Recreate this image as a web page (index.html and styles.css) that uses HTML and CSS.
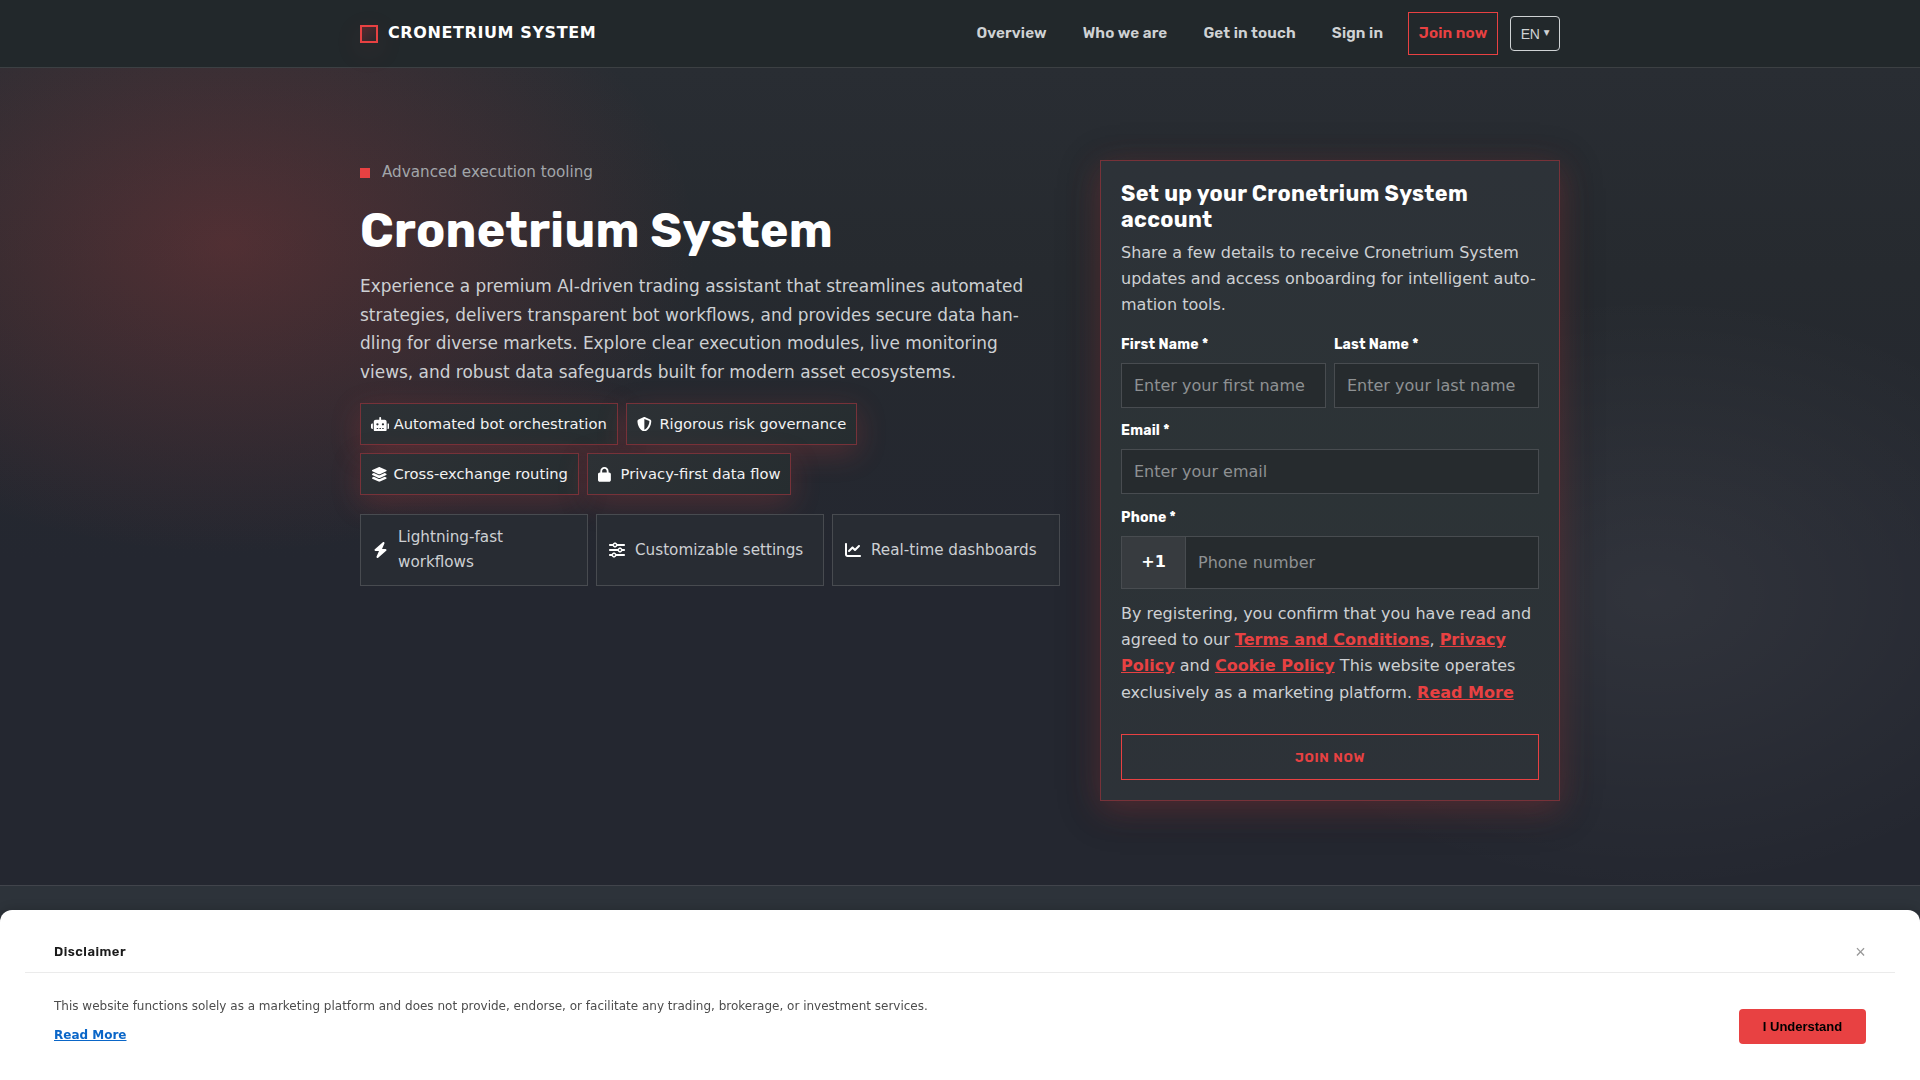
FILE: index.html
```html
<!DOCTYPE html>
<html lang="en">
<head>
<meta charset="utf-8">
<title>Cronetrium System</title>
<link rel="stylesheet" href="styles.css">
</head>
<body>
<header class="header">
  <div class="container header-row">
    <a class="brand"><span class="brand-mark"></span><span class="brand-name">CRONETRIUM SYSTEM</span></a>
    <nav class="nav">
      <a class="nav-link">Overview</a>
      <a class="nav-link">Who we are</a>
      <a class="nav-link">Get in touch</a>
      <a class="nav-link">Sign in</a>
      <a class="nav-link nav-cta">Join now</a>
      <button class="lang">EN <span class="caret">▼</span></button>
    </nav>
  </div>
</header>
<main class="hero">
  <div class="container hero-grid">
    <section class="intro">
      <div class="eyebrow"><span class="dot"></span>Advanced execution tooling</div>
      <h1 class="title">Cronetrium System</h1>
      <p class="lead">Experience a premium AI-driven trading assistant that streamlines automated<br>strategies, delivers transparent bot workflows, and provides secure data han-<br>dling for diverse markets. Explore clear execution modules, live monitoring<br>views, and robust data safeguards built for modern asset ecosystems.</p>
      <div class="chips">
        <span class="chip"><svg class="icon robot" viewBox="0 0 640 512"><path fill-rule="evenodd" d="M320 0c17.700 0 32 14.300 32 32V96H472c39.800 0 72 32.200 72 72V440c0 39.800-32.200 72-72 72H168c-39.800 0-72-32.200-72-72V168c0-39.800 32.200-72 72-72H288V32c0-17.700 14.300-32 32-32zM208 384c-8.800 0-16 7.200-16 16s7.200 16 16 16h32c8.800 0 16-7.200 16-16s-7.200-16-16-16H208zm96 0c-8.800 0-16 7.200-16 16s7.200 16 16 16h32c8.800 0 16-7.200 16-16s-7.200-16-16-16H304zm96 0c-8.800 0-16 7.200-16 16s7.200 16 16 16h32c8.800 0 16-7.200 16-16s-7.200-16-16-16H400zM264 256a40 40 0 1 0-80 0 40 40 0 1 0 80 0zm152 40a40 40 0 1 0 0-80 40 40 0 1 0 0 80zM48 224H64V416H48c-26.500 0-48-21.500-48-48V272c0-26.500 21.500-48 48-48zm544 0c26.500 0 48 21.500 48 48v96c0 26.500-21.500 48-48 48H576V224h16z"/></svg>Automated bot orchestration</span>
        <span class="chip"><svg class="icon small" viewBox="0 0 512 512" preserveAspectRatio="xMinYMid meet"><path fill-rule="evenodd" d="M256 0c4.600 0 9.200 1 13.400 2.900L457.700 82.800c22 9.300 38.400 31 38.300 57.200c-.5 99.200-41.300 280.700-213.600 363.200c-16.700 8-36.100 8-52.800 0C57.300 420.700 16.500 239.200 16 140c-.1-26.200 16.300-47.900 38.300-57.200L242.700 2.900C246.800 1 251.400 0 256 0zm0 66.800V444.800C394 378 431.100 230.100 432 141.400L256 66.800z"/></svg>Rigorous risk governance</span>
        <span class="chip"><svg class="icon small" viewBox="0 0 576 512" preserveAspectRatio="xMinYMid meet"><path d="M264.500 5.200c14.900-6.900 32.100-6.900 47 0l218.600 101c8.500 3.900 13.900 12.400 13.900 21.800s-5.400 17.900-13.900 21.800l-218.600 101c-14.900 6.900-32.100 6.900-47 0L45.900 149.800C37.400 145.800 32 137.300 32 128s5.400-17.900 13.900-21.800L264.500 5.200zM476.900 209.600l53.200 24.600c8.500 3.900 13.900 12.400 13.900 21.800s-5.400 17.900-13.900 21.800l-218.600 101c-14.900 6.900-32.100 6.900-47 0L45.900 277.800C37.400 273.800 32 265.300 32 256s5.400-17.900 13.900-21.800l53.200-24.600 152 70.200c23.400 10.800 50.400 10.800 73.800 0l152-70.200zm0 128l53.200 24.600c8.500 3.900 13.900 12.400 13.900 21.800s-5.400 17.900-13.900 21.800l-218.600 101c-14.900 6.900-32.100 6.900-47 0L45.900 405.800C37.400 401.800 32 393.300 32 384s5.400-17.900 13.900-21.800l53.200-24.600 152 70.200c23.400 10.800 50.400 10.800 73.800 0l152-70.200z"/></svg>Cross-exchange routing</span>
        <span class="chip"><svg class="icon small" viewBox="0 0 448 512" preserveAspectRatio="xMinYMid meet"><path fill-rule="evenodd" d="M144 144v48H304V144c0-44.200-35.800-80-80-80s-80 35.800-80 80zM80 192V144C80 64.500 144.500 0 224 0s144 64.500 144 144v48h16c35.300 0 64 28.700 64 64V448c0 35.300-28.700 64-64 64H64c-35.300 0-64-28.700-64-64V256c0-35.300 28.700-64 64-64H80z"/></svg>Privacy-first data flow</span>
      </div>
      <div class="features">
        <div class="feature"><svg class="icon bolt" viewBox="0 0 448 512"><path d="M349.400 44.600c5.900-13.700 1.500-29.700-10.600-38.500s-28.600-8-39.900 1.800l-256 224c-10 8.800-13.600 22.900-8.900 35.300S50.700 288 64 288H175.500L98.600 467.400c-5.900 13.700-1.500 29.700 10.600 38.500s28.600 8 39.900-1.800l256-224c10-8.800 13.600-22.900 8.900-35.300s-16.600-20.700-30-20.700H272.500L349.400 44.600z"/></svg><span>Lightning-fast workflows</span></div>
        <div class="feature"><svg class="icon square" viewBox="0 0 512 512"><path fill-rule="evenodd" d="M0 416c0 17.700 14.300 32 32 32l54.700 0c12.300 28.300 40.500 48 73.300 48s61-19.700 73.300-48L480 448c17.700 0 32-14.300 32-32s-14.300-32-32-32l-246.700 0c-12.300-28.300-40.500-48-73.300-48s-61 19.700-73.300 48L32 384c-17.700 0-32 14.300-32 32zm128 0a32 32 0 1 1 64 0 32 32 0 1 1-64 0zM320 256a32 32 0 1 1 64 0 32 32 0 1 1-64 0zm32-80c-32.800 0-61 19.700-73.300 48L32 224c-17.700 0-32 14.300-32 32s14.300 32 32 32l246.700 0c12.300 28.300 40.500 48 73.300 48s61-19.700 73.300-48l54.700 0c17.700 0 32-14.300 32-32s-14.300-32-32-32l-54.700 0c-12.300-28.300-40.500-48-73.300-48zM192 128a32 32 0 1 1 0-64 32 32 0 1 1 0 64zm73.300-64C253 35.700 224.800 16 192 16s-61 19.700-73.300 48L32 64C14.300 64 0 78.300 0 96s14.300 32 32 32l86.700 0c12.300 28.300 40.500 48 73.300 48s61-19.700 73.300-48L480 128c17.700 0 32-14.300 32-32s-14.300-32-32-32L265.300 64z"/></svg><span>Customizable settings</span></div>
        <div class="feature"><svg class="icon square" viewBox="0 0 512 512"><path d="M64 64c0-17.700-14.300-32-32-32S0 46.300 0 64V400c0 44.200 35.800 80 80 80H480c17.700 0 32-14.300 32-32s-14.300-32-32-32H80c-8.800 0-16-7.200-16-16V64zm406.600 86.600c12.500-12.500 12.500-32.800 0-45.300s-32.800-12.500-45.300 0L320 210.700l-57.400-57.400c-12.500-12.500-32.800-12.500-45.300 0l-112 112c-12.500 12.500-12.500 32.800 0 45.300s32.800 12.500 45.300 0L240 221.300l57.400 57.400c12.500 12.500 32.800 12.500 45.300 0l128-128z"/></svg><span>Real-time dashboards</span></div>
      </div>
    </section>
    <form class="card">
      <h2 class="card-title">Set up your Cronetrium System<br>account</h2>
      <p class="card-text">Share a few details to receive Cronetrium System<br>updates and access onboarding for intelligent auto-<br>mation tools.</p>
      <div class="pair">
        <div class="field"><label class="label">First Name *</label><input class="input" placeholder="Enter your first name"></div>
        <div class="field"><label class="label">Last Name *</label><input class="input" placeholder="Enter your last name"></div>
      </div>
      <div class="field email"><label class="label">Email *</label><input class="input" placeholder="Enter your email"></div>
      <div class="field tel"><label class="label">Phone *</label>
        <div class="phone"><span class="prefix">+1</span><input class="phone-input" placeholder="Phone number"></div>
      </div>
      <p class="legal">By registering, you confirm that you have read and agreed to our <a>Terms and Conditions</a>, <a>Privacy Policy</a> and <a>Cookie Policy</a> This website operates exclusively as a marketing platform. <a>Read More</a></p>
      <button type="button" class="submit">JOIN NOW</button>
    </form>
  </div>
</main>
<div class="next-section"></div>
<aside class="disclaimer">
  <div class="disclaimer-head"><span class="disclaimer-title">Disclaimer</span><span class="close">×</span></div>
  <div class="disclaimer-body">
    <div class="disclaimer-copy"><p>This website functions solely as a marketing platform and does not provide, endorse, or facilitate any trading, brokerage, or investment services.</p><a>Read More</a></div>
    <button class="accept">I Understand</button>
  </div>
</aside>
</body>
</html>
```
FILE: styles.css
```css
* { box-sizing: border-box; }
html { overflow: hidden; }
body {
  margin: 0;
  height: 1080px;
  overflow: hidden;
  display: flex;
  flex-direction: column;
  background: #242730;
  color: #cdd0d3;
  font: 16px/1.65 "DejaVu Sans", sans-serif;
}
h1, h2, p { margin: 0; }
svg { display: block; fill: #fff; flex: none; }
.container { width: 1200px; margin: 0 auto; }

.header { position: relative; height: 68px; flex: none; background: #22282b; border-bottom: 1px solid #3c4043; }
.header-row { height: 67px; display: flex; justify-content: space-between; align-items: center; }
.brand { display: flex; align-items: center; gap: 10px; }
.brand-mark { width: 18px; height: 18px; margin-top: 2px; border: 2px solid #e84142; background: linear-gradient(135deg, #57292e, #2a292c); box-shadow: 0 8px 30px rgba(232,65,66,.12); }
.brand-name { font-size: 16px; font-weight: 700; letter-spacing: .6px; color: #fff; }
.nav { display: flex; align-items: center; }
.nav-link { font: 600 15.2px/25px Rubik, Inter, sans-serif; letter-spacing: .15px; color: #cfd2d4; margin-right: 36px; }
.nav-cta { margin: 0 12px 0 -11px; padding: 8px 9.6px; border: 1px solid #e84142; color: #e84142; }
.lang { display: flex; align-items: center; justify-content: center; gap: 4px; width: 50px; height: 35px; padding: 0; border: 1px solid #cfd2d4; border-radius: 4px; background: transparent; color: #cfd2d4; font: 14px/1 "Liberation Sans", sans-serif; letter-spacing: -.3px; }
.caret { font: 7.5px/1 "DejaVu Sans", sans-serif; margin-top: -1px; }

.hero {
  height: 817px;
  flex: none;
  padding-top: 92px;
  background:
    radial-gradient(ellipse 470px 310px at 228px 176px, rgba(232,65,66,.22), transparent),
    radial-gradient(ellipse 440px 300px at 1653px 525px, rgba(255,255,245,.06), transparent),
    linear-gradient(180deg, #292d33, #262a2f 25%, #242730 60%);
}
.hero-grid { display: grid; grid-template-columns: 700px 460px; gap: 40px; align-items: start; }
.eyebrow { display: flex; align-items: center; gap: 12px; height: 25px; font-size: 15.2px; color: #a2a6aa; }
.dot { width: 10px; height: 10px; margin-top: 1px; background: #e84142; }
.title { margin-top: 17px; font: 700 48px/58px Rubik, Inter, sans-serif; letter-spacing: .32px; color: #fff; }
.lead { margin-top: 12px; font-size: 16.96px; line-height: 28.5px; white-space: nowrap; }

.chips { display: flex; flex-wrap: wrap; gap: 8px; margin-top: 17px; }
.chip { display: flex; align-items: center; padding: 8px 10px; border: 1px solid #773239; background: linear-gradient(135deg, #2d3135, #262d30); color: #f2f2f3; font-size: 14.72px; line-height: 24.2px; box-shadow: 0 8px 30px rgba(232,65,66,.22); white-space: nowrap; }
.icon.robot { width: 18.4px; height: 14.72px; margin-right: 4.3px; }
.icon.small { width: 18px; height: 14.72px; margin-right: 4.6px; }
.features { display: grid; grid-template-columns: repeat(3, 228px); gap: 8px; margin-top: 18.6px; }
.feature { display: flex; align-items: center; gap: 10px; height: 72.2px; padding: 0 12px; border: 1px solid #484b50; background: #282c33; font-size: 15.2px; line-height: 25.08px; }
.icon.bolt { width: 15px; height: 16px; }
.icon.square { width: 16px; height: 16px; }

.card { display: flex; flex-direction: column; height: 641px; padding: 20px; border: 1px solid #773239; background: linear-gradient(180deg, #2d3238, #2c3336 50%, #2d3238); box-shadow: 0 8px 30px rgba(232,65,66,.25), 0 8px 40px rgba(20,25,25,.3); }
.card-title { font: 700 21.6px/26px Rubik, Inter, sans-serif; letter-spacing: .34px; color: #fff; }
.card-text { margin-top: 6.6px; white-space: nowrap; }
.pair { display: grid; grid-template-columns: 1fr 1fr; gap: 8px; margin-top: 13.2px; }
.label { display: block; height: 31px; padding-top: 1px; font: 700 14px/24px Rubik, Inter, sans-serif; letter-spacing: .2px; color: #fff; }
.email { margin-top: 10px; }
.tel { margin-top: 11px; }
.input { display: block; width: 100%; height: 45px; padding: 0 12px; border: 1px solid #484c50; border-radius: 0; background: #262b2e; font: 16px "DejaVu Sans", sans-serif; }
::placeholder { color: #8e9193; opacity: 1; }
.phone { display: flex; height: 53px; border: 1px solid #484c50; background: #262b2e; }
.prefix { width: 64px; border-right: 1px solid #484c50; background: #373b3f; color: #fff; font-weight: 700; text-align: center; line-height: 49px; }
.phone-input { flex: 1; border: 0; padding: 0 12px; background: transparent; font: 16px "DejaVu Sans", sans-serif; }
.legal { margin-top: 11.6px; }
.legal a { color: #e84142; font-weight: 700; text-decoration: underline; }
.submit { margin-top: auto; height: 46px; border: 1px solid #e84142; background: transparent; color: #e84142; font: 600 13.33px Rubik, Inter, sans-serif; letter-spacing: .7px; }

.next-section { flex: 1; border-top: 1px solid #41444b; background: #2d333a; }
.disclaimer { position: fixed; left: 0; right: 0; bottom: 0; height: 170px; padding: 25px 25px 0; border-radius: 12px 12px 0 0; background: #fff; color: #4d4d4d; box-shadow: 0 -2px 10px rgba(0,0,0,.15); }
.disclaimer-head { display: flex; justify-content: space-between; align-items: center; height: 38px; padding: 0 29px 4px; border-bottom: 1px solid #ebebeb; }
.disclaimer-title { font: 600 13px/20px Rubik, Inter, sans-serif; letter-spacing: .5px; color: #1a1a1a; }
.close { width: 11px; text-align: center; font: 18px/20px "Liberation Sans", sans-serif; color: #999; }
.disclaimer-body { display: flex; justify-content: space-between; padding: 23px 29px 0; font-size: 12px; line-height: 20px; }
.disclaimer-copy a { display: inline-block; margin-top: 9px; color: #0a66c8; font-weight: 700; text-decoration: underline; }
.accept { width: 127px; height: 35px; margin-top: 13px; border: 0; border-radius: 4px; background: #e84142; color: #000; font: 700 13px "Liberation Sans", sans-serif; }
```
